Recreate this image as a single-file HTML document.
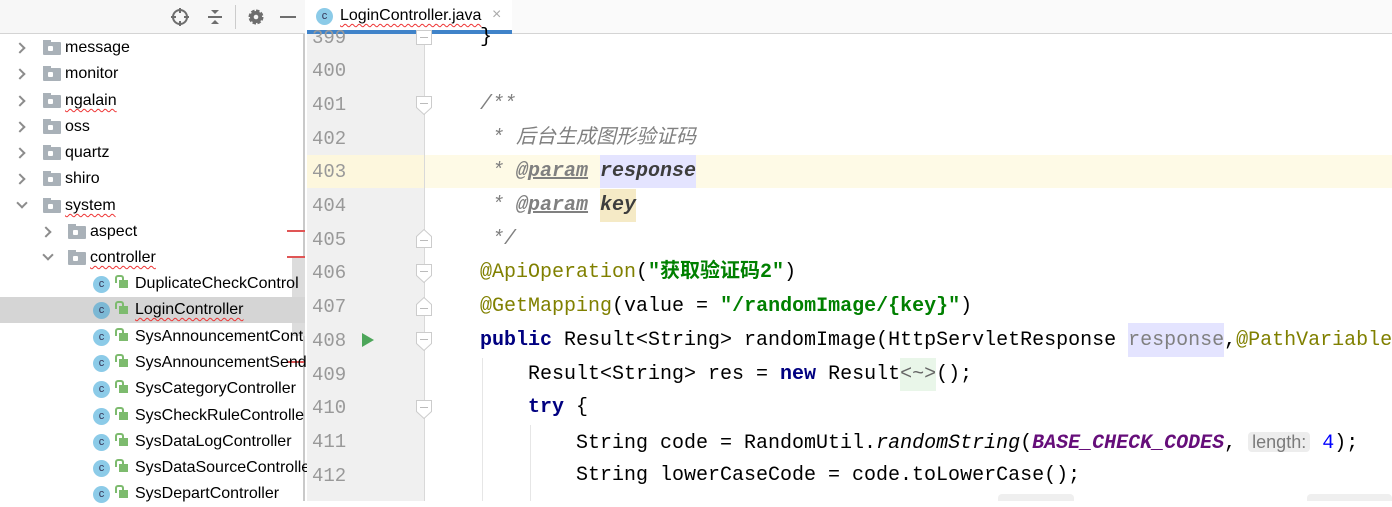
<!DOCTYPE html>
<html><head><meta charset="utf-8">
<style>
*{margin:0;padding:0;box-sizing:border-box}
body{width:1392px;height:501px;overflow:hidden;background:#fff;position:relative;font-family:"Liberation Sans","Noto Sans CJK SC",sans-serif}
.abs{position:absolute}
#left{left:0;top:0;width:305px;height:501px;background:#fff;border-right:2px solid #c9c9c9}
#lhead{left:0;top:0;width:305px;height:34px;background:#f7f7f7;border-bottom:1px solid #d4d4d4}
.row{position:absolute;left:0;width:305px;height:26px;font-size:16px;line-height:26px;color:#000;white-space:nowrap}
.chev{position:absolute;top:9px;width:8px;height:8px;border-right:2px solid #8c8c8c;border-bottom:2px solid #8c8c8c}
.chev.r{transform:rotate(-45deg)}
.chev.d{transform:rotate(45deg);top:6px}
.fold{position:absolute;top:7px;width:18px;height:13px;background:#a9b1b8;border-radius:1px}
.fold:before{content:"";position:absolute;left:0;top:-2px;width:8px;height:3px;background:#a9b1b8}
.fold:after{content:"";position:absolute;left:5px;top:4px;width:5px;height:5px;background:#fff;border-radius:1px}
.ci{position:absolute;top:5px;width:17px;height:17px;border-radius:50%;background:#8ccbe8;font-size:11px;line-height:17px;text-align:center;color:#335;font-family:"Liberation Sans",sans-serif;font-style:normal}
.lk{position:absolute;top:9px;width:9px;height:8px;background:#7dbb6e}
.lk:before{content:"";position:absolute;left:-4px;top:-5px;width:5px;height:6px;border:2px solid #7dbb6e;border-bottom:none;border-radius:3px 3px 0 0}
.sq{text-decoration:underline wavy #e33;text-decoration-thickness:1px;text-underline-offset:3px}
#tabbar{left:307px;top:0;width:1085px;height:34px;background:#fafafa;border-bottom:1px solid #d4d4d4}
#tab{left:307px;top:0;width:205px;height:34px;background:#fff;border-bottom:4px solid #4083c9}
#gut{left:307px;top:34px;width:118px;height:467px;background:#f0f0f0}
#gline{left:424px;top:34px;width:1px;height:467px;background:#d9d9d9}
.ln{position:absolute;left:312px;font-family:"Liberation Mono",monospace;font-size:19px;color:#999;height:34px;line-height:34px}
.cl{position:absolute;height:34px;line-height:34px;font-family:"Liberation Mono","Noto Sans CJK SC",monospace;font-size:20px;white-space:pre;color:#000}
.kw{color:#000080;font-weight:bold}
.an{color:#808000}
.st{color:#008000;font-weight:bold}
.cm{color:#808080;font-style:italic}
.tg{color:#808080;font-style:italic;font-weight:bold;text-decoration:underline}
.pn{color:#3d3d3d;font-style:italic;font-weight:bold}
.cn{color:#660e7a;font-style:italic;font-weight:bold}
.nm{color:#0000ff}
.fm{position:absolute;left:416px}
.hint{background:#ededed;color:#7a7a7a;font-family:"Liberation Sans",sans-serif;font-size:18px;border-radius:4px;padding:0 4px;font-style:normal}
</style></head><body>
<div id="left" class="abs"></div>
<div id="lhead" class="abs">
 <svg class="abs" style="left:170px;top:7px" width="20" height="20" viewBox="0 0 20 20"><circle cx="10" cy="10" r="7" fill="none" stroke="#6e6e6e" stroke-width="2"/><path d="M10 1v5M10 14v5M1 10h5M14 10h5" stroke="#6e6e6e" stroke-width="2"/></svg>
 <svg class="abs" style="left:206px;top:7px" width="18" height="20" viewBox="0 0 18 20"><path d="M2 10h14" stroke="#6e6e6e" stroke-width="2"/><path d="M5 3h8l-4 4z M5 17h8l-4-4z" fill="#6e6e6e"/></svg>
 <div class="abs" style="left:235px;top:5px;width:1px;height:24px;background:#ccc"></div>
 <svg class="abs" style="left:246px;top:7px" width="20" height="20" viewBox="0 0 20 20"><circle cx="10" cy="10" r="5.5" fill="none" stroke="#6e6e6e" stroke-width="4" stroke-dasharray="3 1.3"/><circle cx="10" cy="10" r="6" fill="#6e6e6e"/><circle cx="10" cy="10" r="2.3" fill="#f7f7f7"/></svg>
 <div class="abs" style="left:280px;top:16px;width:16px;height:2px;background:#6e6e6e"></div>
</div>

<div class="row" style="top:35px"><i class="chev r" style="left:16px"></i><i class="fold" style="left:43px"></i><span class="abs" style="left:65px">message</span></div>
<div class="row" style="top:61px"><i class="chev r" style="left:16px"></i><i class="fold" style="left:43px"></i><span class="abs" style="left:65px">monitor</span></div>
<div class="row" style="top:88px"><i class="chev r" style="left:16px"></i><i class="fold" style="left:43px"></i><span class="abs sq" style="left:65px">ngalain</span></div>
<div class="row" style="top:114px"><i class="chev r" style="left:16px"></i><i class="fold" style="left:43px"></i><span class="abs" style="left:65px">oss</span></div>
<div class="row" style="top:140px"><i class="chev r" style="left:16px"></i><i class="fold" style="left:43px"></i><span class="abs" style="left:65px">quartz</span></div>
<div class="row" style="top:166px"><i class="chev r" style="left:16px"></i><i class="fold" style="left:43px"></i><span class="abs" style="left:65px">shiro</span></div>
<div class="row" style="top:193px"><i class="chev d" style="left:18px"></i><i class="fold" style="left:43px"></i><span class="abs sq" style="left:65px">system</span></div>
<div class="row" style="top:219px"><i class="chev r" style="left:42px"></i><i class="fold" style="left:68px"></i><span class="abs" style="left:90px">aspect</span></div>
<div class="row" style="top:245px"><i class="chev d" style="left:44px"></i><i class="fold" style="left:68px"></i><span class="abs sq" style="left:90px">controller</span></div>
<div class="abs" style="left:292px;top:258px;width:13px;height:78px;background:#dcdcdc"></div>
<div class="abs" style="left:287px;top:230px;width:18px;height:2px;background:#e05555"></div>
<div class="abs" style="left:287px;top:256px;width:18px;height:2px;background:#e05555"></div>
<div class="abs" style="left:287px;top:361px;width:18px;height:2px;background:#e05555"></div>
<div class="row" style="top:271px"><i class="ci" style="left:93px">c</i><i class="lk" style="left:119px"></i><span class="abs" style="left:135px">DuplicateCheckControl</span></div>
<div class="row" style="top:297px;background:#d5d5d5"><i class="ci" style="left:93px;background:#7cb8d4">c</i><i class="lk" style="left:119px"></i><span class="abs sq" style="left:135px">LoginController</span></div>
<div class="row" style="top:324px"><i class="ci" style="left:93px">c</i><i class="lk" style="left:119px"></i><span class="abs" style="left:135px">SysAnnouncementCont</span></div>
<div class="row" style="top:350px"><i class="ci" style="left:93px">c</i><i class="lk" style="left:119px"></i><span class="abs" style="left:135px">SysAnnouncementSend</span></div>
<div class="row" style="top:376px"><i class="ci" style="left:93px">c</i><i class="lk" style="left:119px"></i><span class="abs" style="left:135px">SysCategoryController</span></div>
<div class="row" style="top:403px"><i class="ci" style="left:93px">c</i><i class="lk" style="left:119px"></i><span class="abs" style="left:135px">SysCheckRuleControlle</span></div>
<div class="row" style="top:429px"><i class="ci" style="left:93px">c</i><i class="lk" style="left:119px"></i><span class="abs" style="left:135px">SysDataLogController</span></div>
<div class="row" style="top:455px"><i class="ci" style="left:93px">c</i><i class="lk" style="left:119px"></i><span class="abs" style="left:135px">SysDataSourceControlle</span></div>
<div class="row" style="top:481px"><i class="ci" style="left:93px">c</i><i class="lk" style="left:119px"></i><span class="abs" style="left:135px">SysDepartController</span></div>

<div id="tabbar" class="abs"></div>
<div id="tab" class="abs">
 <i class="ci" style="left:9px;top:8px">c</i>
 <span class="abs sq" style="left:33px;top:7px;font-size:16px">LoginController.java</span>
 <span class="abs" style="left:185px;top:6px;font-size:16px;color:#aaa">×</span>
</div>

<div id="gut" class="abs"></div>
<div class="abs" style="left:307px;top:155px;width:1085px;height:33px;background:#fefae6"></div>
<div class="abs" style="left:307px;top:155px;width:118px;height:33px;background:#fdf7dd"></div>
<div id="gline" class="abs"></div>

<div class="ln" style="top:21px">399</div>
<div class="ln" style="top:54px">400</div>
<div class="ln" style="top:88px">401</div>
<div class="ln" style="top:122px">402</div>
<div class="ln" style="top:155px">403</div>
<div class="ln" style="top:189px">404</div>
<div class="ln" style="top:223px">405</div>
<div class="ln" style="top:256px">406</div>
<div class="ln" style="top:290px">407</div>
<div class="ln" style="top:324px">408</div>
<div class="ln" style="top:358px">409</div>
<div class="ln" style="top:391px">410</div>
<div class="ln" style="top:425px">411</div>
<div class="ln" style="top:459px">412</div>

<svg class="fm" style="top:30px" width="16" height="16"><path d="M0.5 0.5h15v14h-15z" fill="#fff" stroke="#ccc"/><path d="M4 7.5h8" stroke="#bbb"/></svg>
<svg class="fm" style="top:96px" width="16" height="20"><path d="M0.5 0.5h15v11l-7.5 7l-7.5-7z" fill="#fff" stroke="#ccc"/><path d="M4 7.5h8" stroke="#bbb"/></svg>
<svg class="fm" style="top:228px" width="16" height="20"><path d="M0.5 19.5h15v-11l-7.5-7l-7.5 7z" fill="#fff" stroke="#ccc"/><path d="M4 12.5h8" stroke="#bbb"/></svg>
<svg class="fm" style="top:264px" width="16" height="20"><path d="M0.5 0.5h15v11l-7.5 7l-7.5-7z" fill="#fff" stroke="#ccc"/><path d="M4 7.5h8" stroke="#bbb"/></svg>
<svg class="fm" style="top:296px" width="16" height="20"><path d="M0.5 19.5h15v-11l-7.5-7l-7.5 7z" fill="#fff" stroke="#ccc"/><path d="M4 12.5h8" stroke="#bbb"/></svg>
<svg class="fm" style="top:332px" width="16" height="20"><path d="M0.5 0.5h15v11l-7.5 7l-7.5-7z" fill="#fff" stroke="#ccc"/><path d="M4 7.5h8" stroke="#bbb"/></svg>
<svg class="fm" style="top:400px" width="16" height="20"><path d="M0.5 0.5h15v11l-7.5 7l-7.5-7z" fill="#fff" stroke="#ccc"/><path d="M4 7.5h8" stroke="#bbb"/></svg>
<svg class="abs" style="left:361px;top:332px" width="14" height="16"><path d="M1 1L13 8L1 15Z" fill="#4da65a"/></svg>

<div class="abs" style="left:1128px;top:323px;width:96px;height:34px;background:#e4e4ff"></div>
<div class="abs" style="left:600px;top:155px;width:96px;height:33px;background:#e4e4ff"></div>
<div class="abs" style="left:600px;top:189px;width:36px;height:33px;background:#f5eac6"></div>
<div class="abs" style="left:900px;top:358px;width:36px;height:33px;background:#e9f6e9"></div>

<div class="cl" style="left:480px;top:21px">}</div>
<div class="cl cm" style="left:480px;top:88px">/**</div>
<div class="cl cm" style="left:480px;top:122px"> * 后台生成图形验证码</div>
<div class="cl" style="left:480px;top:155px"><span class="cm"> * </span><span class="tg">@param</span> <span class="pn">response</span></div>
<div class="cl" style="left:480px;top:189px"><span class="cm"> * </span><span class="tg">@param</span> <span class="pn">key</span></div>
<div class="cl cm" style="left:480px;top:223px"> */</div>
<div class="cl" style="left:480px;top:256px"><span class="an">@ApiOperation</span>(<span class="st">"获取验证码2"</span>)</div>
<div class="cl" style="left:480px;top:290px"><span class="an">@GetMapping</span>(value = <span class="st">"/randomImage/{key}"</span>)</div>
<div class="cl" style="left:480px;top:324px"><span class="kw">public</span> Result&lt;String&gt; randomImage(HttpServletResponse <span style="color:#808080">response</span>,<span class="an">@PathVariable</span></div>
<div class="cl" style="left:528px;top:358px">Result&lt;String&gt; res = <span class="kw">new</span> Result<span style="color:#666">&lt;~&gt;</span>();</div>
<div class="cl" style="left:528px;top:391px"><span class="kw">try</span> {</div>
<div class="cl" style="left:576px;top:425px">String code = RandomUtil.<i>randomString</i>(<span class="cn">BASE_CHECK_CODES</span>, <span class="hint">length:</span> <span class="nm">4</span>);</div>
<div class="cl" style="left:576px;top:459px">String lowerCaseCode = code.toLowerCase();</div>
<div class="abs" style="left:482px;top:358px;width:1px;height:143px;background:#e6e6e6"></div>
<div class="abs" style="left:530px;top:425px;width:1px;height:76px;background:#e6e6e6"></div>
<div class="abs" style="left:998px;top:494px;width:76px;height:7px;background:#efefef;border-radius:4px 4px 0 0"></div>
<div class="abs" style="left:1307px;top:494px;width:85px;height:7px;background:#efefef;border-radius:4px 4px 0 0"></div>
</body></html>
